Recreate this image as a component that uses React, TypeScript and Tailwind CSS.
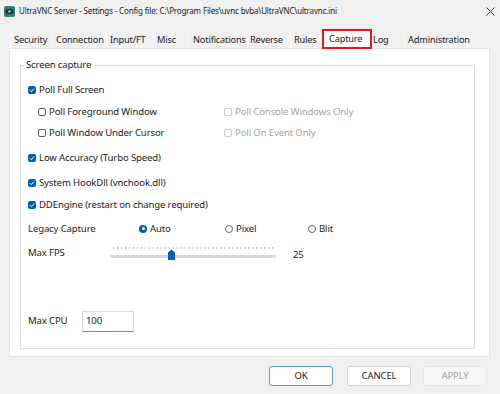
import React from "react";

// ── tabs ──────────────────────────────────────────────────────

const tabs = [
  { label: "Security", w: "w-[41px]", pl: "pl-[3px]" },
  { label: "Connection", w: "w-[55px]", pl: "pl-[4px]" },
  { label: "Input/FT", w: "w-[47px]", pl: "pl-[3px]" },
  { label: "Misc", w: "w-[35px]", pl: "pl-[3px]" },
  { label: "Notifications", w: "w-[59px]", pl: "pl-[4px]" },
  { label: "Reverse", w: "w-[43px]", pl: "pl-[2px]" },
  { label: "Rules", w: "w-[32px]", pl: "pl-[3px]" },
  { label: "Capture", w: "w-[50px]", pl: "pl-[5px]", active: true },
  { label: "Log", w: "w-[32px]", pl: "pl-0" },
  { label: "Administration", w: "w-[64px]", pl: "pl-[3px]" },
];

// ── controls ──────────────────────────────────────────────────

function Check({ checked = false, disabled = false }: { checked?: boolean; disabled?: boolean }) {
  if (checked) {
    return (
      <span className="flex h-[8px] w-[8px] shrink-0 items-center justify-center rounded-[2px] bg-[#005fb8]">
        <svg width="6" height="6" viewBox="0 0 6 6">
          <path d="M1 3.2 L2.4 4.6 L5 1.6" fill="none" stroke="#fff" strokeWidth="1" />
        </svg>
      </span>
    );
  }
  return (
    <span
      className={`h-[8px] w-[8px] shrink-0 rounded-[2px] border bg-white ${
        disabled ? "border-[#c9c9c9]" : "border-[#5f5f5f]"
      }`}
    />
  );
}

function Radio({ checked = false }: { checked?: boolean }) {
  return checked ? (
    <span className="flex h-[8px] w-[8px] shrink-0 items-center justify-center rounded-full bg-[#005fb8]">
      <span className="h-[3px] w-[3px] rounded-full bg-white" />
    </span>
  ) : (
    <span className="h-[8px] w-[8px] shrink-0 rounded-full border border-[#6b6b6b] bg-white" />
  );
}

function CheckRow({
  label,
  checked,
  disabled,
}: {
  label: string;
  checked?: boolean;
  disabled?: boolean;
}) {
  return (
    <span className={`flex items-center gap-[3px] whitespace-nowrap ${disabled ? "text-[#a3a3a3]" : ""}`}>
      <Check checked={checked} disabled={disabled} />
      {label}
    </span>
  );
}

function Slider() {
  const ticks = Array.from({ length: 41 }, (_, i) => 3 + i * 3.98);
  return (
    <svg width="166" height="15" viewBox="0 0 166 15">
      {ticks.map((x) => (
        <rect key={x} x={x} y="0" width="1" height="2" fill="#b9b9b9" />
      ))}
      <rect x="0" y="8" width="166" height="3" rx="1.5" fill="#dadada" />
      <path d="M58 5.5 L61.5 2.5 L65 5.5 L65 13 L58 13 Z" fill="#005fb8" />
    </svg>
  );
}

// ─────────────────────────────────────────────────────────────

export default function App() {
  return (
    <div
      className="h-[394px] w-[500px] overflow-hidden bg-[#f0f0f0] text-[9.6px] tracking-[-0.15px] text-[#1b1b1b]"
      style={{ fontFamily: '"Noto Sans", "Open Sans", sans-serif' }}
    >
      {/* TITLE BAR */}
      <div className="flex h-[22px] items-center">
        <svg className="ml-[4px]" width="11" height="11" viewBox="0 0 11 11">
          <rect x="0" y="0" width="11" height="11" rx="2" fill="#2f7f7a" />
          <ellipse cx="5.5" cy="5.5" rx="4" ry="2.6" fill="#1c2a2a" />
          <circle cx="5.5" cy="5.5" r="1.3" fill="#8fd6cf" />
        </svg>
        <span className="ml-[4px] whitespace-nowrap text-[8px] tracking-[-0.15px] text-[#222]">
          UltraVNC Server - Settings - Config file: C:\Program Files\uvnc bvba\UltraVNC\ultravnc.ini
        </span>
        <svg className="ml-auto mr-[5px]" width="9" height="9" viewBox="0 0 9 9">
          <path d="M0.5 0.5 L8.5 8.5 M8.5 0.5 L0.5 8.5" stroke="#333" strokeWidth="1" />
        </svg>
      </div>

      {/* TABS */}
      <div className="ml-[10px] mt-[9px] flex h-[17px] items-start text-[9.2px]">
        {tabs.map((t) =>
          t.active ? (
            <span
              key={t.label}
              className={`relative z-10 -mt-[2px] flex h-[20px] ${t.w} ${t.pl} items-center whitespace-nowrap border-2 border-[#e3141c] bg-white`}
            >
              {t.label}
            </span>
          ) : (
            <span
              key={t.label}
              className={`flex h-[17px] ${t.w} ${t.pl} items-center whitespace-nowrap border-l border-[#fafafa]`}
            >
              {t.label}
            </span>
          )
        )}
      </div>

      {/* PANEL */}
      <div className="ml-[9px] h-[309px] w-[481px] border border-[#e4e4e4] bg-white">
        <div className="relative ml-[10px] mt-[16px] h-[284px] w-[455px] border border-[#dddddd]">
          <span className="absolute -top-[8px] left-[4px] bg-white px-[1px] leading-[14px]">Screen capture</span>

          <div className="flex flex-col pl-[7px] pt-[14px]">
            <div className="flex h-[20px] items-center">
              <CheckRow label="Poll Full Screen" checked />
            </div>
            <div className="mt-[2px] flex h-[20px] items-center">
              <span className="ml-[10px] w-[186px]">
                <CheckRow label="Poll Foreground Window" />
              </span>
              <CheckRow label="Poll Console Windows Only" disabled />
            </div>
            <div className="mt-[1px] flex h-[20px] items-center">
              <span className="ml-[10px] w-[186px]">
                <CheckRow label="Poll Window Under Cursor" />
              </span>
              <CheckRow label="Poll On Event Only" disabled />
            </div>
            <div className="mt-[5px] flex h-[20px] items-center">
              <CheckRow label="Low Accuracy (Turbo Speed)" checked />
            </div>
            <div className="mt-[5px] flex h-[20px] items-center">
              <CheckRow label="System HookDll (vnchook.dll)" checked />
            </div>
            <div className="mt-[2px] flex h-[20px] items-center">
              <CheckRow label="DDEngine (restart on change required)" checked />
            </div>
            <div className="mt-[4px] flex h-[20px] items-center">
              <span className="w-[111px]">Legacy Capture</span>
              <span className="flex w-[86px] items-center gap-[3px]">
                <Radio checked />
                Auto
              </span>
              <span className="flex w-[83px] items-center gap-[3px]">
                <Radio />
                Pixel
              </span>
              <span className="flex items-center gap-[3px]">
                <Radio />
                Blit
              </span>
            </div>
            <div className="mt-[4px] flex h-[20px] items-center">
              <span className="w-[82px]">Max FPS</span>
              <span className="mt-[2px] w-[183px]">
                <Slider />
              </span>
              <span className="mt-[4px]">25</span>
            </div>
            <div className="mt-[48px] flex h-[21px] items-center">
              <span className="w-[54px]">Max CPU</span>
              <span className="flex h-[21px] w-[52px] items-start border border-[#dedede] border-b-[#8a8a8a] pl-[3px] pt-[2px]">
                100
              </span>
            </div>
          </div>
        </div>
      </div>

      {/* BUTTONS */}
      <div className="mt-[9px] flex h-[20px]">
        <button className="ml-[269px] h-[20px] w-[64px] rounded-[3px] border border-[#5a9ad6] bg-white">
          OK
        </button>
        <button className="ml-[14px] h-[20px] w-[64px] rounded-[3px] border border-[#d2d2d2] bg-white">
          CANCEL
        </button>
        <button className="ml-[12px] h-[20px] w-[64px] rounded-[3px] border border-[#e6e6e6] bg-[#f6f6f6] text-[#a0a0a0]">
          APPLY
        </button>
      </div>
    </div>
  );
}
